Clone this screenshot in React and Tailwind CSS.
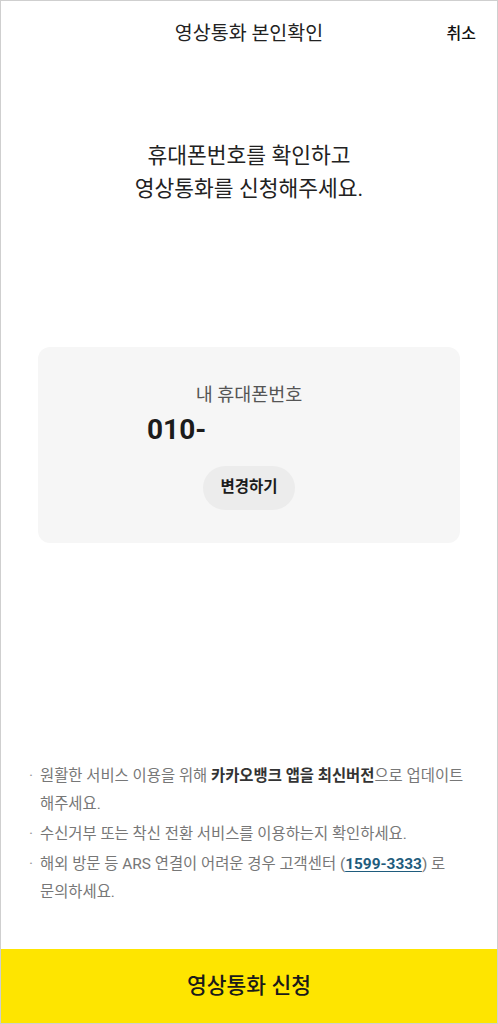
const font = { fontFamily: "Roboto, 'Noto Sans CJK KR', 'Noto Sans', sans-serif" };

const notes = [
  <>
    원활한 서비스 이용을 위해 <b className="font-bold text-[#333]">카카오뱅크 앱을 최신버전</b>으로 업데이트
    해주세요.
  </>,
  <>수신거부 또는 착신 전환 서비스를 이용하는지 확인하세요.</>,
  <>
    해외 방문 등 ARS 연결이 어려운 경우 고객센터 (
    <span className="font-bold text-[#1f5c7d] underline underline-offset-2">1599-3333</span>) 로 문의하세요.
  </>,
];

export default function App() {
  return (
    <div
      style={font}
      className="w-full h-[1024px] flex flex-col bg-white border border-[#cfcfcf] text-[#222] overflow-hidden"
    >
      <header className="relative h-[65px] flex items-center justify-center">
        <h1 className="text-[19.5px] text-[#222]">영상통화 본인확인</h1>
        <button className="absolute right-[21px] top-[21px] text-[16px] font-medium text-[#111]">취소</button>
      </header>

      <p className="mt-[73px] text-center text-[21.5px] leading-[33px] text-[#222]">
        휴대폰번호를 확인하고
        <br />
        영상통화를 신청해주세요.
      </p>

      <section className="mt-[142px] mx-[37px] rounded-[12px] bg-[#f6f6f6] pt-[36px] pb-[33px] flex flex-col">
        <div className="text-center text-[18.5px] leading-[24px] text-[#555]">내 휴대폰번호</div>
        <div className="mt-[6px] pl-[109px] text-[28px] leading-[34px] font-bold text-[#1c1c1c]">010-</div>
        <div className="mt-[19px] flex justify-center">
          <button className="h-[44px] px-[17px] rounded-full bg-[#ececec] text-[15.5px] font-bold text-[#1c1c1c]">
            변경하기
          </button>
        </div>
      </section>

      <ul className="mt-[219px] pl-[28px] pr-[16px] flex flex-col gap-[2px] text-[15.4px] leading-[28px] text-[#777] break-keep">
        {notes.map((n, i) => (
          <li key={i} className="flex">
            <span className="w-[11px] shrink-0 text-[#999]">·</span>
            <span>{n}</span>
          </li>
        ))}
      </ul>

      <button className="mt-auto h-[74px] w-full bg-[#fee500] text-[21.5px] font-medium text-[#1a1a1a]">
        영상통화 신청
      </button>
    </div>
  );
}
